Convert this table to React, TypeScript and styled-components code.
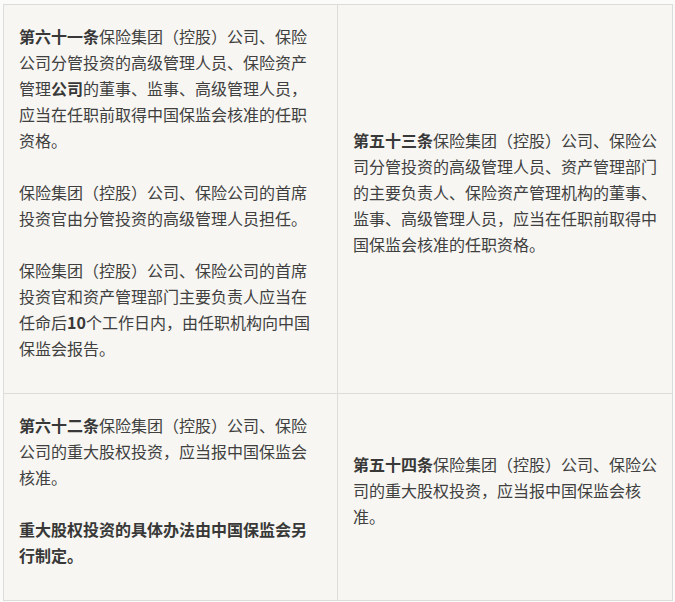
import React from "react";
import styled, { createGlobalStyle } from "styled-components";

const GlobalStyle = createGlobalStyle`
  html, body { margin: 0; padding: 0; background: #fbfbfa; }
  body {
    font-family: "Noto Sans CJK SC", "Noto Sans", sans-serif;
    color: #404040;
  }
`;

const Page = styled.div`
  padding: 4px 0 0 3px;
`;

const Grid = styled.div`
  display: grid;
  grid-template-columns: 334px 335px;
  width: 670px;
  border-left: 1px solid #dcdcda;
  border-top: 1px solid #dcdcda;
  background: #f7f6f2;
  box-sizing: border-box;
`;

const Cell = styled.div<{ $center?: boolean }>`
  box-sizing: border-box;
  border-right: 1px solid #dcdcda;
  border-bottom: 1px solid #dcdcda;
  padding: 18px ${(p) => (p.$center ? "12px" : "15px")} 6px 15px;
  font-size: 16px;
  line-height: 26px;
  display: flex;
  flex-direction: column;
  justify-content: ${(p) => (p.$center ? "center" : "flex-start")};
`;

const Para = styled.p`
  margin: 0 0 26px;
`;

const B = styled.strong`
  font-weight: 700;
  color: #383838;
`;

export default function App() {
  return (
    <>
      <GlobalStyle />
      <Page>
        <Grid>
          <Cell>
            <Para>
              <B>第六十一条</B>保险集团（控股）公司、保险公司分管投资的高级管理人员、保险资产管理<B>公司</B>的董事、监事、高级管理人员，应当在任职前取得中国保监会核准的任职资格。
            </Para>
            <Para>保险集团（控股）公司、保险公司的首席投资官由分管投资的高级管理人员担任。</Para>
            <Para>
              保险集团（控股）公司、保险公司的首席投资官和资产管理部门主要负责人应当在任命后<B>10</B>个工作日内，由任职机构向中国保监会报告。
            </Para>
          </Cell>
          <Cell $center>
            <Para>
              <B>第五十三条</B>保险集团（控股）公司、保险公司分管投资的高级管理人员、资产管理部门的主要负责人、保险资产管理机构的董事、监事、高级管理人员，应当在任职前取得中国保监会核准的任职资格。
            </Para>
          </Cell>
          <Cell>
            <Para>
              <B>第六十二条</B>保险集团（控股）公司、保险公司的重大股权投资，应当报中国保监会核准。
            </Para>
            <Para>
              <B>重大股权投资的具体办法由中国保监会另行制定。</B>
            </Para>
          </Cell>
          <Cell $center>
            <Para>
              <B>第五十四条</B>保险集团（控股）公司、保险公司的重大股权投资，应当报中国保监会核准。
            </Para>
          </Cell>
        </Grid>
      </Page>
    </>
  );
}
